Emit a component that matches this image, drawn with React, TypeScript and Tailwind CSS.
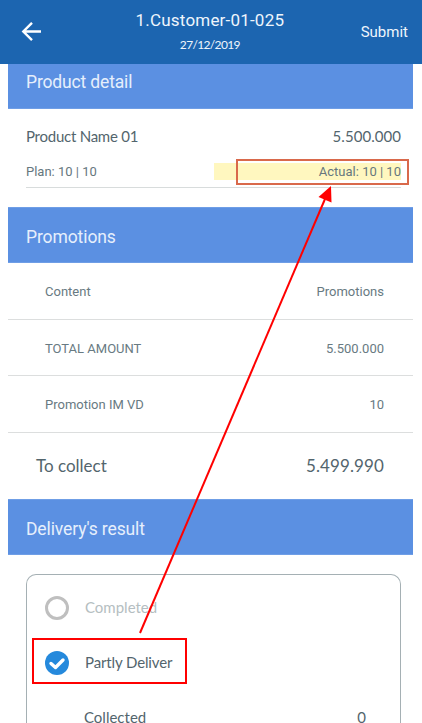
import React from "react";

const roboto = "font-[Roboto,sans-serif]";
const lato = "font-[Lato,sans-serif]";

function SectionTitle({ children, className = "" }: { children: React.ReactNode; className?: string }) {
  return (
    <h2 className={`${roboto} flex items-center border-y border-[#6f9ee6] bg-[#5b90e2] pl-[18px] text-[17.5px] font-normal text-[#e6effc] ${className}`}>
      {children}
    </h2>
  );
}

function PromotionRow({ label, value, className = "" }: { label: string; value: string; className?: string }) {
  return (
    <div className={`${roboto} flex items-center justify-between border-b border-[#dcdede] pt-[2px] pr-[29px] pl-[37px] text-[13px] text-[#687a82] ${className}`}>
      <span>{label}</span>
      <span>{value}</span>
    </div>
  );
}

export default function App() {
  return (
    <div className="relative h-[723px] w-[422px] overflow-hidden bg-white">
      <header className="flex h-16 items-center justify-between bg-[#1c65b0] pr-[14px] pl-[21px] text-[#eef5fc]">
        <svg width="21" height="20" viewBox="0 0 21 20" fill="none" stroke="white" strokeWidth="2.4">
          <path d="M20 9.5H3M11 0.8L2.3 9.5L11 18.2" />
        </svg>
        <div className="flex flex-col items-center pl-[17px]">
          <h1 className={`${roboto} text-[17px] leading-[22px] font-normal tracking-[0.2px]`}>1.Customer-01-025</h1>
          <p className={`${lato} mt-[4px] text-[12px] leading-[20px] tracking-[-0.65px]`}>27/12/2019</p>
        </div>
        <button className={`${roboto} pt-px text-[15px]`}>Submit</button>
      </header>

      <main className="mr-[9px] ml-[8px]">
        <SectionTitle className="h-[45px] border-t-0 pb-[7px] tracking-[-0.15px]">Product detail</SectionTitle>
        <section className="mr-[12px] ml-[18px] h-[79px] border-b border-[#d8dcdc]">
          <div className={`${lato} flex h-[54px] items-center justify-between text-[15px] text-[#53656d]`}>
            <span className="tracking-[-0.25px]">Product Name 01</span>
            <span className="tracking-[0.05px]">5.500.000</span>
          </div>
          <div className={`${roboto} flex h-[17px] items-center justify-between text-[13px] text-[#66777e]`}>
            <span>Plan: 10 | 10</span>
            <span className="flex h-[17px] w-[187px] items-center justify-end bg-[#fff7bf]">Actual: 10 | 10</span>
          </div>
        </section>

        <SectionTitle className="mt-[19px] h-[56px] pt-[4px] tracking-[-0.1px]">Promotions</SectionTitle>
        <section>
          <PromotionRow label="Content" value="Promotions" className="h-[57px]" />
          <PromotionRow label="TOTAL AMOUNT" value="5.500.000" className="h-[56px]" />
          <PromotionRow label="Promotion IM VD" value="10" className="h-[57px]" />
          <div className={`${lato} flex h-[66px] items-center justify-between pr-[29px] pl-[28px] text-[17px] text-[#53656d]`}>
            <span>To collect</span>
            <span className="tracking-[0.1px]">5.499.990</span>
          </div>
        </section>

        <SectionTitle className="h-[56px] pt-[4px] tracking-[-0.12px]">Delivery's result</SectionTitle>
        <section className={`${lato} mt-[19px] mr-[12px] ml-[18px] h-[149px] rounded-t-[10px] border border-b-0 border-[#a5b0b4] pr-[34px] pl-[18px] text-[15px] text-[#53656d]`}>
          <div className="flex h-[65px] items-center gap-[16px] text-[#b5bec1]">
            <span className="h-[24px] w-[24px] rounded-full border-[3.5px] border-[#bfbfbf]" />
            <span>Completed</span>
          </div>
          <div className="flex h-[45px] items-center gap-[16px]">
            <svg width="24" height="24" viewBox="0 0 24 24">
              <circle cx="12" cy="12" r="12" fill="#2589dc" />
              <path d="M6 12.5L10.5 16.5L18 9" fill="none" stroke="white" strokeWidth="3.4" strokeLinecap="round" strokeLinejoin="round" />
            </svg>
            <span className="tracking-[-0.12px]">Partly Deliver</span>
          </div>
          <div className="flex h-[38px] items-end justify-between pl-[39px] leading-[12px]">
            <span>Collected</span>
            <span>0</span>
          </div>
        </section>
      </main>

      <div className="absolute top-[159px] left-[236px] h-[26px] w-[173px] border-2 border-[#d9694b]" />
      <div className="absolute top-[638px] left-[32px] h-[46px] w-[155px] border-2 border-[#ff0000]" />
      <svg className="absolute inset-0" width="422" height="723" viewBox="0 0 422 723">
        <path d="M140 633L325 199" stroke="#ff0000" strokeWidth="2" />
        <path d="M331 186L318.5 197L331.5 202.5Z" fill="#ff0000" />
      </svg>
    </div>
  );
}
